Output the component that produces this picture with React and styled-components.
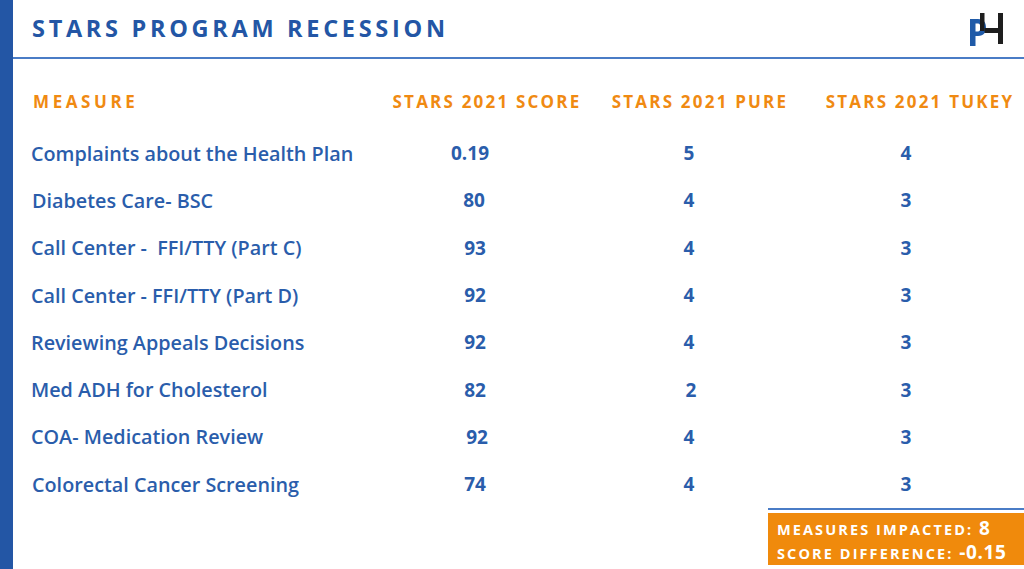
import React from "react";
import styled, { createGlobalStyle } from "styled-components";

const Global = createGlobalStyle`
  html, body { margin: 0; padding: 0; background: #fff; }
  body { font-family: "Open Sans", "Noto Sans", sans-serif; }
  * { box-sizing: border-box; }
`;

const Page = styled.div`
  width: 1024px;
  height: 569px;
  display: flex;
  overflow: hidden;
  background: #fff;
`;

const SideBar = styled.div`
  width: 13px;
  flex: none;
  background: #2356a5;
`;

const Main = styled.div`
  flex: 1;
  display: flex;
  flex-direction: column;
  min-width: 0;
`;

const Header = styled.header`
  height: 59px;
  flex: none;
  display: flex;
  align-items: center;
  justify-content: space-between;
  padding: 0 19px 2px 19px;
  border-bottom: 2px solid #4a7cc6;
`;

const Title = styled.h1`
  margin: 0;
  font-size: 23.5px;
  font-weight: 700;
  letter-spacing: 3.7px;
  color: #2356a5;
`;

const Logo = styled.svg`
  width: 45px;
  height: 45px;
  align-self: flex-start;
  margin-top: 8px;
  margin-right: 0;
`;

const Table = styled.div`
  display: grid;
  grid-template-columns: 365px 218px 208px 1fr;
  grid-template-rows: 52.5px;
  grid-auto-rows: 47.3px;
  align-items: center;
  margin-top: 18px;
`;

const HeadCell = styled.div`
  font-size: 17px;
  font-weight: 700;
  letter-spacing: ${(p) => (p.$left ? "3.6px" : "2.2px")};
  color: #f08a12;
  padding-left: ${(p) => (p.$left ? "20px" : p.$shift || "0px")};
  white-space: nowrap;
  height: 52px;
  display: flex;
  align-items: center;
  justify-content: ${(p) => (p.$left ? "flex-start" : "center")};
  align-self: start;
  margin-top: -2px;
`;

const NameCell = styled.div`
  font-size: 19.8px;
  font-weight: 600;
  color: #2a5dab;
  padding-left: ${(p) => p.$indent || "18px"};
  white-space: pre;
`;

const ValueCell = styled.div`
  font-size: 19px;
  font-weight: 700;
  color: #2a5dab;
  text-align: center;
  padding-right: ${(p) => p.$pad || "28px"};
`;

const Footer = styled.div`
  flex: 1;
  display: flex;
  justify-content: flex-end;
  align-items: flex-start;
  padding-top: 0;
`;

const Summary = styled.div`
  width: 256px;
  border-top: 2px solid #4a7cc6;
  padding-top: 3px;
`;

const SummaryBox = styled.div`
  background: #f08a0c;
  height: 52px;
  padding: 5px 0 0 9px;
  display: flex;
  flex-direction: column;
  justify-content: center;
`;

const SummaryLine = styled.div`
  color: #fff;
  font-size: 14.5px;
  font-weight: 700;
  letter-spacing: 2.1px;
  line-height: 23px;
  white-space: nowrap;
`;

const SummaryValue = styled.span`
  font-size: 19px;
  letter-spacing: 0.6px;
`;

const rows = [
  { name: "Complaints about the Health Plan", score: "0.19", pure: "5", tukey: "4", indent: "18px", sPad: "34px" },
  { name: "Diabetes Care- BSC", score: "80", pure: "4", tukey: "3", indent: "19px", sPad: "26px" },
  { name: "Call Center -  FFI/TTY (Part C)", score: "93", pure: "4", tukey: "3", indent: "18px", sPad: "24px" },
  { name: "Call Center - FFI/TTY (Part D)", score: "92", pure: "4", tukey: "3", indent: "18px", sPad: "24px" },
  { name: "Reviewing Appeals Decisions", score: "92", pure: "4", tukey: "3", indent: "18px", sPad: "24px" },
  { name: "Med ADH for Cholesterol", score: "82", pure: "2", tukey: "3", indent: "18px", sPad: "24px", pPad: "18px" },
  { name: "COA- Medication Review", score: "92", pure: "4", tukey: "3", indent: "18px", sPad: "20px" },
  { name: "Colorectal Cancer Screening", score: "74", pure: "4", tukey: "3", indent: "19px", sPad: "24px" },
];

function LogoMark() {
  return (
    <Logo viewBox="0 0 45 45">
      <rect x="10" y="11" width="5.5" height="27" fill="#1f5aa8" />
      <path d="M15 11 H18 C24 11 26 15 26 19.5 C26 24 24 28 18 28 H15 V23.5 H18 C19.5 23.5 20.5 22 20.5 19.5 C20.5 17 19.5 15.5 18 15.5 H15 Z" fill="#1f5aa8" />
      <rect x="20" y="5" width="4.5" height="18" fill="#1e1e1e" />
      <rect x="38" y="5" width="5" height="31" fill="#1e1e1e" />
      <rect x="24.5" y="20" width="13.5" height="5" fill="#1e1e1e" />
    </Logo>
  );
}

export default function App() {
  return (
    <Page>
      <Global />
      <SideBar />
      <Main>
        <Header>
          <Title>STARS PROGRAM RECESSION</Title>
          <LogoMark />
        </Header>
        <Table>
          <HeadCell $left>MEASURE</HeadCell>
          <HeadCell>STARS 2021 SCORE</HeadCell>
          <HeadCell>STARS 2021 PURE</HeadCell>
          <HeadCell $shift="12px">STARS 2021 TUKEY</HeadCell>
          {rows.map((r) => (
            <React.Fragment key={r.name}>
              <NameCell $indent={r.indent}>{r.name}</NameCell>
              <ValueCell $pad={r.sPad}>{r.score}</ValueCell>
              <ValueCell $pad={r.pPad || "22px"}>{r.pure}</ValueCell>
              <ValueCell $pad="16px">{r.tukey}</ValueCell>
            </React.Fragment>
          ))}
        </Table>
        <Footer>
          <Summary>
            <SummaryBox>
              <SummaryLine>
                MEASURES IMPACTED: <SummaryValue>8</SummaryValue>
              </SummaryLine>
              <SummaryLine>
                SCORE DIFFERENCE: <SummaryValue>-0.15</SummaryValue>
              </SummaryLine>
            </SummaryBox>
          </Summary>
        </Footer>
      </Main>
    </Page>
  );
}
